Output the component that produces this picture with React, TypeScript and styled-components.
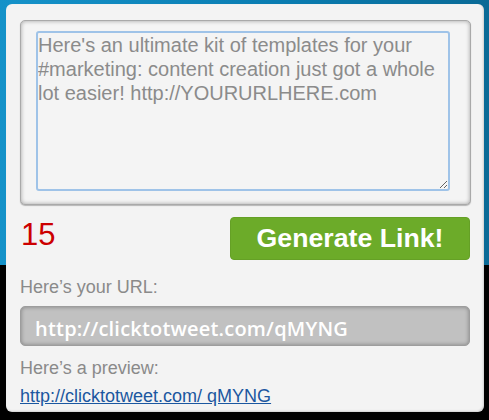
import styled, { createGlobalStyle } from 'styled-components';

const GlobalStyle = createGlobalStyle`
  html, body {
    margin: 0;
    padding: 0;
  }
  body {
    background:
      linear-gradient(90deg, #1592c9 0%, #0a7db2 55%, #0a6a96 100%) top / 100% 265px no-repeat,
      #000;
    min-height: 420px;
    font-family: "Liberation Sans", Arial, Helvetica, sans-serif;
  }
`;

const SHORT_URL = 'http://clicktotweet.com/qMYNG';
const TWEET_TEXT =
  "Here's an ultimate kit of templates for your #marketing: content creation just got a whole lot easier! http://YOURURLHERE.com";

export default function App() {
  return (
    <>
      <GlobalStyle />
      <Panel>
        <ComposeFrame>
          <TweetInput defaultValue={TWEET_TEXT} spellCheck={false} />
        </ComposeFrame>
        <ActionRow>
          <CharCount>15</CharCount>
          <GenerateBtn type="button">Generate Link!</GenerateBtn>
        </ActionRow>
        <Label>Here’s your URL:</Label>
        <UrlBox>{SHORT_URL}</UrlBox>
        <Label $small>Here’s a preview:</Label>
        <PreviewLink href="#">http://clicktotweet.com/ qMYNG</PreviewLink>
      </Panel>
    </>
  );
}

const Panel = styled.div`
  margin: 4px 5px 0 6px;
  height: 408px;
  box-sizing: border-box;
  padding: 16px 13px 0 14px;
  background: #f3f3f3;
  border-radius: 6px;
  box-shadow: inset -1px -1px 2px rgba(0, 0, 0, 0.15);
  display: flex;
  flex-direction: column;
`;

const ComposeFrame = styled.div`
  height: 185px;
  box-sizing: border-box;
  padding: 10px 20px 13px 15px;
  border-radius: 5px;
  border: 1px solid #a9a9a9;
  background: #f4f4f4;
  box-shadow:
    inset 0 0 4px rgba(0, 0, 0, 0.35),
    0 1px 1px rgba(0, 0, 0, 0.25);
  display: flex;
`;

const TweetInput = styled.textarea`
  flex: 1;
  margin: 0;
  box-sizing: border-box;
  padding: 0;
  border: 2px solid #9fc3e8;
  border-radius: 3px;
  outline: none;
  background: #f4f4f4;
  color: #8b8b8b;
  font-family: "Liberation Sans", Arial, Helvetica, sans-serif;
  font-size: 20px;
  line-height: 24px;
  resize: both;
`;

const ActionRow = styled.div`
  margin-top: 12px;
  height: 43px;
  display: flex;
  align-items: flex-start;
  justify-content: space-between;
  padding: 0 1px 0 1px;
`;

const CharCount = styled.span`
  color: #cc0000;
  font-size: 31px;
  line-height: 36px;
`;

const GenerateBtn = styled.button`
  width: 240px;
  height: 43px;
  border: 1px solid #65a026;
  border-radius: 4px;
  background: #6cab29;
  color: #fff;
  font-family: "Liberation Sans", Arial, Helvetica, sans-serif;
  font-weight: bold;
  font-size: 26.7px;
  padding: 0;
  cursor: pointer;
`;

const Label = styled.div<{ $small?: boolean }>`
  margin-top: ${(p) => (p.$small ? '12px' : '17px')};
  color: #8a8a8a;
  font-size: 18px;
  line-height: 21px;
`;

const UrlBox = styled.div`
  margin-top: 8px;
  height: 40px;
  margin-right: 1px;
  box-sizing: border-box;
  padding: 9px 14px 0;
  border-radius: 5px;
  border: 1px solid #9d9d9d;
  background: #c1c1c1;
  box-shadow: inset 0 0 4px rgba(0, 0, 0, 0.35);
  color: #fff;
  font-family: "Open Sans", sans-serif;
  font-weight: 600;
  font-size: 20px;
  line-height: 26px;
  letter-spacing: 0.2px;
  overflow: hidden;
  white-space: nowrap;
`;

const PreviewLink = styled.a`
  margin-top: 7px;
  align-self: flex-start;
  color: #1b57a0;
  font-size: 18px;
  line-height: 21px;
`;
